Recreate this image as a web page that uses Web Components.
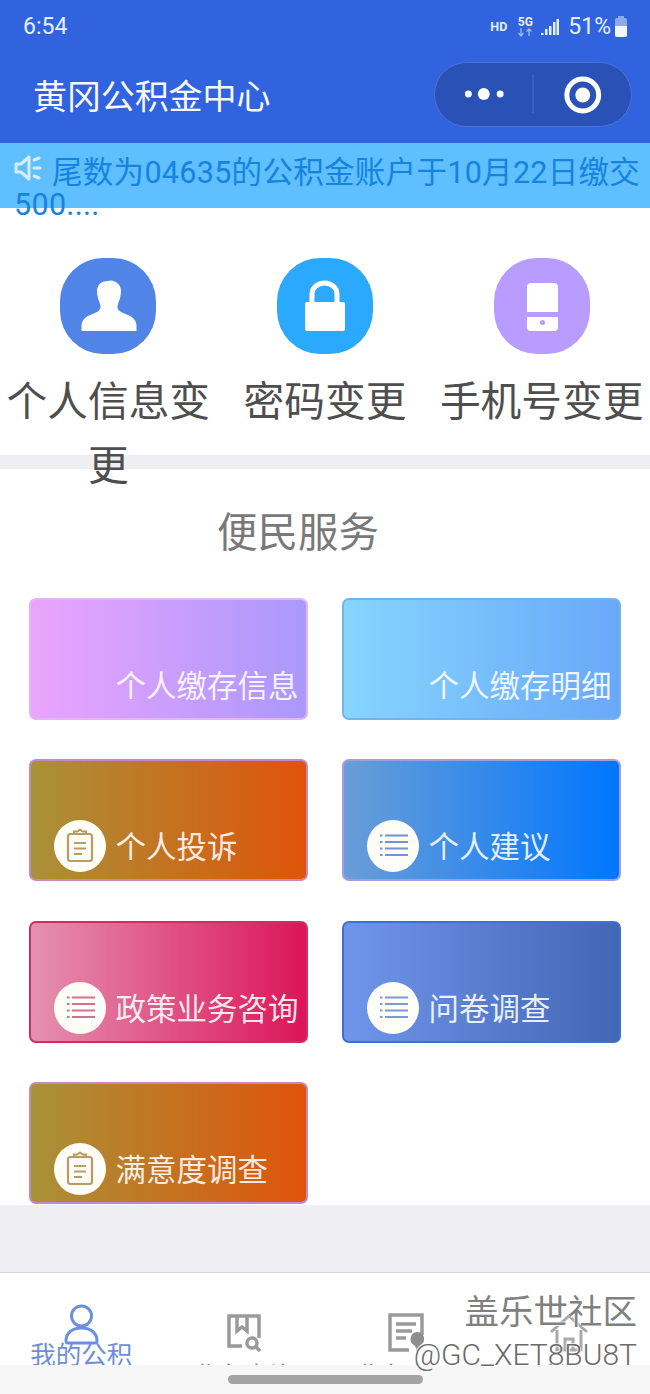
<!DOCTYPE html>
<html lang="zh"><head><meta charset="utf-8"><title>黄冈公积金中心</title>
<style>
html,body{margin:0;padding:0;background:#fff}
body{width:650px;height:1394px;overflow:hidden;position:relative;font-family:"Noto Sans CJK SC","Noto Sans",sans-serif}
</style></head><body>
<app-header></app-header>
<notice-bar>尾数为04635的公积金账户于10月22日缴交500....</notice-bar>
<quick-links>
  <quick-link label="个人信息变更" color="#5084e6" icon="user"></quick-link>
  <quick-link label="密码变更" color="#2aa9ff" icon="lock"></quick-link>
  <quick-link label="手机号变更" color="#b99cff" icon="phone"></quick-link>
</quick-links>
<section-gap></section-gap>
<service-section heading="便民服务">
  <service-card label="个人缴存信息" from="#eba4fd" to="#aa98fb" edge="#e2b6f2"></service-card>
  <service-card label="个人缴存明细" from="#86d5ff" to="#69a8f8" edge="#74b4ea"></service-card>
  <service-card label="个人投诉" from="#a89238" to="#e0530a" edge="#c58ac4" icon="clip" ink="#b99c62"></service-card>
  <service-card label="个人建议" from="#6a9ed6" to="#0076ff" edge="#a39de2" icon="list" ink="#6f93d6"></service-card>
  <service-card label="政策业务咨询" from="#e592b0" to="#db1458" edge="#d22b66" icon="list" ink="#d36e96"></service-card>
  <service-card label="问卷调查" from="#7096ec" to="#4166b4" edge="#3f72cb" icon="list" ink="#7c99d5"></service-card>
  <service-card label="满意度调查" from="#a89238" to="#e0530a" edge="#c58ac4" icon="clip" ink="#b99c62"></service-card>
</service-section>
<tab-bar>
  <tab-item label="我的公积" icon="user" active></tab-item>
  <tab-item label="业务查询" icon="book"></tab-item>
  <tab-item label="业务办理" icon="doc"></tab-item>
  <tab-item label="首页" icon="home"></tab-item>
</tab-bar>
<gesture-bar></gesture-bar>
<water-mark></water-mark>

<script>
const def=(name,render)=>customElements.define(name,class extends HTMLElement{
  constructor(){super();this.attachShadow({mode:'open'})}
  connectedCallback(){this.shadowRoot.innerHTML=render(this)}
});

def('app-header',()=>`<style>
:host{display:block;height:143px;background:#3063dd;color:#fff}
.status{height:46px;padding:8px 22px 0 23px;box-sizing:border-box;display:flex;align-items:center;color:#e6efff;font:400 23px/30px Roboto,sans-serif}
.time{flex:1}
.hd{font:700 12.500px/12px Roboto,sans-serif;margin-right:10px}
.net{display:flex;flex-direction:column;align-items:center;margin-right:8px;font:700 12px/11px Roboto,sans-serif}
.net svg{display:block}
.sig{margin-right:9px}
.bat{margin-left:3px}
.nav{height:97px;display:flex;align-items:flex-start;padding:16px 18px 0 33px;box-sizing:border-box}
.title{flex:1;font:400 34px/66px "Noto Sans CJK SC",sans-serif;color:#f7f9ff;letter-spacing:-.1px}
.cap{width:198px;height:65px;box-sizing:border-box;border:1px solid #4a72d8;border-radius:33px;background:#2a52b6;display:flex;align-items:center}
.cap svg{display:block}
</style>
<div class="status"><span class="time">6:54</span><span class="hd">HD</span>
<span class="net">5G<svg width="16" height="9" viewBox="0 0 16 9"><path d="M4 0v7M1.500 5 4 8l2.500-3M12 8V1M9.500 3.500 12 1l2.500 2.500" fill="none" stroke="#9fb9f0" stroke-width="1.300"/></svg></span>
<svg class="sig" width="18" height="20" viewBox="0 0 18 20"><g fill="#e6efff"><rect x="0" y="16" width="2.500" height="2"/><rect x="4" y="12" width="2.500" height="6"/><rect x="8" y="9" width="2.500" height="9"/><rect x="12" y="5" width="2.500" height="13"/><rect x="15.500" y="2" width="2.500" height="16"/></g></svg>
<span>51%</span>
<svg class="bat" width="14" height="24" viewBox="0 0 14 24"><rect x="4" y="1" width="6" height="3" fill="#8fa8e8"/><rect x="1" y="3" width="12" height="19" rx="2" fill="#8fa8e8"/><path d="M1 11h12v9a2 2 0 0 1-2 2H3a2 2 0 0 1-2-2z" fill="#f2f6ff"/></svg>
</div>
<div class="nav"><div class="title">黄冈公积金中心</div>
<div class="cap"><svg width="197" height="63" viewBox="0 0 197 63"><g fill="#fff"><circle cx="33.500" cy="31" r="3.500"/><circle cx="49" cy="31" r="6"/><circle cx="65.500" cy="31" r="3.500"/></g><rect x="98" y="12" width="1" height="38" fill="#4a70cf"/><circle cx="148.500" cy="32" r="16" fill="none" stroke="#fff" stroke-width="5"/><circle cx="148.500" cy="32" r="7.500" fill="#fff"/></svg></div></div>`);

def('notice-bar',()=>`<style>
:host{display:block;height:65px;background:#5fbfff;box-sizing:border-box;padding:12px 2px 0 14px;font:400 30.500px/32px Roboto,"Noto Sans CJK SC",sans-serif;letter-spacing:.3px;color:#1683e0;position:relative}
svg{display:inline-block;vertical-align:2px;margin-right:10px}
</style><svg width="28" height="26" viewBox="0 0 28 26"><path d="M2 9h5l8-7v22l-8-7H2z" fill="none" stroke="#d5eeff" stroke-width="3" stroke-linejoin="round"/><path d="M20 5l5-2M20 13h6M20 21l5 2" stroke="#d5eeff" stroke-width="3" fill="none" stroke-linecap="round"/></svg><slot></slot>`);

def('quick-links',()=>`<style>
:host{display:grid;grid-template-columns:repeat(3,216.670px);height:247px;box-sizing:border-box;padding-top:50px;position:relative;z-index:1}
</style><slot></slot>`);

const qi={
user:`<path d="M48 23c-7 0-11 4-11 10 0 4 1 8 2 10 1 3 1.500 4 1.500 6 0 3-3 5-8 7-7 2.500-11 6-11 12v5h55v-5c0-6-4-9.500-11-12-5-2-8-4-8-7 0-2 .5-3 1.500-6 1-2 2-6 2-10 0-6-4-10-11-10.500z" fill="#fff"/>`,
lock:`<path d="M35 46V36a12.500 11 0 0 1 25 0v10" fill="none" stroke="#fff" stroke-width="5"/><rect x="28" y="44" width="40" height="29" rx="2" fill="#fff"/>`,
phone:`<path d="M33 29a4 4 0 0 1 4-4h23a4 4 0 0 1 4 4v25H33z" fill="#fff"/><path d="M33 59h31v10a4 4 0 0 1-4 4H37a4 4 0 0 1-4-4z" fill="#fff"/><circle cx="48.500" cy="64.500" r="2.500" fill="#b99cff"/>`};
def('quick-link',e=>`<style>
:host{display:block;text-align:center;font:400 40.700px/64px "Noto Sans CJK SC",sans-serif;color:#4e4e4e}
.ic{width:96px;height:96px;margin:0 auto 13px;border-radius:45%;background:${e.getAttribute('color')};display:block}
.t{padding:0 4px}
</style><svg class="ic" viewBox="0 0 96 96">${qi[e.getAttribute('icon')]}</svg><div class="t">${e.getAttribute('label')}</div>`);

def('section-gap',()=>`<style>:host{display:block;height:14px;background:#eeeef3}</style>`);

def('service-section',e=>`<style>
:host{display:block;height:736px;background:#fff;box-sizing:border-box;position:relative}
h2{margin:0;height:129px;padding:31px 54px 0 0;box-sizing:border-box;text-align:center;font:400 40.500px/60px "Noto Sans CJK SC",sans-serif;color:#797979}
.g{display:grid;grid-template-columns:279px 279px;column-gap:34px;row-gap:39.330px;padding-left:29px;grid-auto-rows:122px}
</style><h2>${e.getAttribute('heading')}</h2><div class="g"><slot></slot></div>`);

const si=ink=>({
clip:`<rect x="14" y="14" width="24" height="27" rx="2.500" fill="none" stroke="${ink}" stroke-width="2.200"/><path d="M20 14v-2.500h3.500l2.500-2 2.500 2H32V14z" fill="#fffdf8" stroke="${ink}" stroke-width="2"/><path d="M20 23h12M20 28.500h12M20 34h8" stroke="${ink}" stroke-width="2.200"/>`,
list:`<g stroke="${ink}" stroke-width="2"><path d="M18 15.500h23M18 22h23M18 28.500h23M18 35h23"/><path d="M13 15.500h2.500M13 22h2.500M13 28.500h2.500M13 35h2.500"/></g>`});
def('service-card',e=>{const ic=e.getAttribute('icon');return `<style>
:host{display:block;box-sizing:border-box;border:2px solid ${e.getAttribute('edge')};border-radius:7px;background:linear-gradient(90deg,${e.getAttribute('from')},${e.getAttribute('to')}) border-box;color:rgba(255,255,255,.88);position:relative;font:400 30.500px/40px "Noto Sans CJK SC",sans-serif}
.r{position:absolute;left:23px;top:59px;display:flex;align-items:center;white-space:nowrap}
.c{width:52px;height:52px;border-radius:50%;margin-right:9.500px;flex:none;${ic?'background:#fffdf8':''}}
span{margin-bottom:2px}
svg{display:block}
</style><div class="r"><div class="c">${ic?`<svg width="52" height="52" viewBox="0 0 52 52">${si(e.getAttribute('ink'))[ic]}</svg>`:''}</div><span>${e.getAttribute('label')}</span></div>`});

def('tab-bar',()=>`<style>
:host{display:grid;grid-template-columns:repeat(4,162.500px);position:absolute;left:0;top:1205px;width:650px;height:160px;overflow:hidden;background:#fff;box-sizing:border-box;border-top:67px solid #eeeef3}
:host::before{content:"";position:absolute;left:0;right:0;top:0;height:1px;background:#d6d6da}
</style><slot></slot>`);

const ti={
user:`<g fill="none" stroke="#6a90de" stroke-width="3"><circle cx="22.500" cy="13" r="10"/><path d="M7 38c0-8 6-13 15.500-13S38 30 38 38c0 1.500-1 2-2 2H9c-1 0-2-.5-2-2z"/></g>`,
book:`<g fill="none" stroke="#9a9a9a" stroke-width="3.500"><path d="M20 36H7V6h30v22"/><path d="M15 6v15l5-4 5 4V6"/><circle cx="30" cy="33" r="5"/><path d="M34 37l4 4"/></g>`,
doc:`<g fill="none" stroke="#9a9a9a" stroke-width="3.500"><path d="M25 40H6V5h32v20"/><path d="M12 14h20M12 21h16M12 28h10"/></g><path d="M33 22a7 7 0 0 1 5 12l-6 8c1-3 0-5-2-7a7 7 0 0 1 3-13z" fill="#8e8e8e"/>`,
home:`<g fill="none" stroke="#a9a9a9" stroke-width="3"><path d="M4 22 22 6l18 16M10 20v20h24V20"/><path d="M18 40V29h8v11"/></g>`};
def('tab-item',e=>{const a=e.hasAttribute('active');return `<style>
:host{display:block;text-align:center;font:400 25.500px/28px "Noto Sans CJK SC",sans-serif;color:${a?'#6c8fd6':'#8a8a8a'};padding-top:${a?31:38}px;box-sizing:border-box}
svg{display:block;margin:0 auto ${a?-8:6}px}
</style><svg width="44" height="44" viewBox="0 0 44 44">${ti[e.getAttribute('icon')]}</svg><div>${e.getAttribute('label')}</div>`});

def('gesture-bar',()=>`<style>
:host{display:block;position:absolute;left:0;top:1365px;width:650px;height:29px;background:#f6f6f6}
i{display:block;position:absolute;left:228px;top:10px;width:195px;height:9px;border-radius:5px;background:#a3a3a3}
</style><i></i>`);

def('water-mark',()=>`<style>
:host{display:flex;flex-direction:column;align-items:flex-end;position:absolute;right:13px;top:1286px;pointer-events:none;color:#808080;text-shadow:1px 1px 0 rgba(255,255,255,.9),-1px -1px 0 rgba(255,255,255,.7)}
.a{font:400 34.500px/46px "Noto Sans CJK SC",sans-serif}
.b{font:300 30px/36px Roboto,sans-serif;margin-top:5px;color:#6a6a6a}
</style><div class="a">盖乐世社区</div><div class="b">@GC_XET8BU8T</div>`);
</script>
</body></html>
